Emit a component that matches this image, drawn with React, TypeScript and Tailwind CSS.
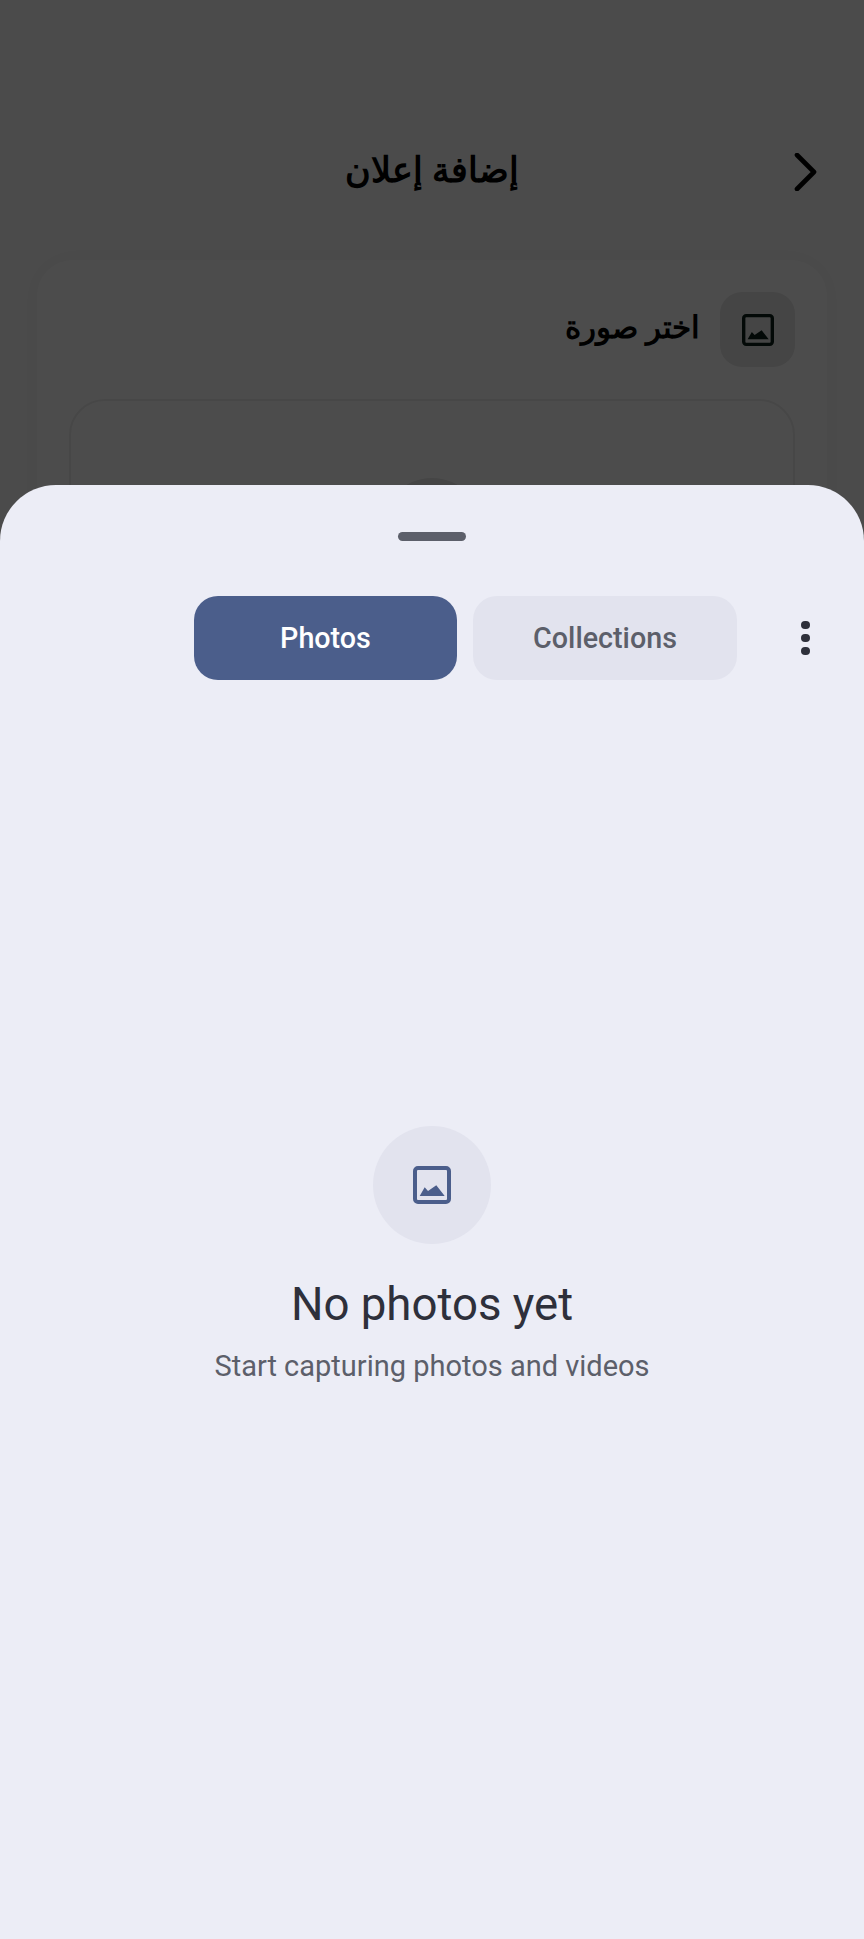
import React from "react";

function ImageIcon({ className }: { className?: string }) {
  return (
    <svg viewBox="0 0 38 38" className={className} fill="none">
      <rect x="2" y="2" width="34" height="34" rx="3" stroke="currentColor" strokeWidth="4" />
      <path d="M6.7 30 L11.7 21.3 L15 25 L23.3 19.3 L31.7 30 Z" fill="currentColor" />
    </svg>
  );
}

export default function App() {
  return (
    <div className="relative h-[1939px] w-[864px] overflow-hidden bg-[#fafafa] font-['Roboto',sans-serif]">
      {/* Page behind the sheet */}
      <div dir="rtl" className="flex flex-col px-[37px] pt-[145px]">
        <header className="relative flex h-[56px] items-center justify-center">
          <svg viewBox="0 0 24 38" className="absolute right-[9px] top-[8px] h-[38px] w-[24px]" fill="none">
            <path d="M3 2 L20 19 L3 36" stroke="#000" strokeWidth="4.6" strokeLinecap="round" strokeLinejoin="round" />
          </svg>
          <h1 className="mb-[5px] font-['Liberation_Serif',serif] text-[35px] font-bold leading-[40px] text-black">إضافة إعلان</h1>
        </header>
        <section className="mt-[59px] flex h-[700px] flex-col rounded-[36px] bg-white px-[32px] pt-[32px] shadow-[0_0_24px_rgba(0,0,0,0.02)]">
          <div className="flex items-center gap-[20px]">
            <div className="flex h-[75px] w-[75px] items-center justify-center rounded-[22px] bg-[#e6e6e6]">
              <ImageIcon className="h-[32px] w-[32px] text-[#0b2019]" />
            </div>
            <h2 className="mb-[3px] font-['Liberation_Serif',serif] text-[30.6px] font-bold leading-[36px] text-black">اختر صورة</h2>
          </div>
          <div className="mt-[32px] flex h-[400px] flex-col items-center rounded-[36px] border-2 border-[#eeeeee] pt-[77px]">
            <div className="h-[100px] w-[100px] rounded-full bg-[#e6e6e6]" />
          </div>
        </section>
      </div>

      {/* Scrim */}
      <div className="absolute inset-0 bg-black/70" />

      {/* Bottom sheet */}
      <div className="absolute inset-x-0 top-[485px] bottom-0 flex flex-col rounded-t-[56px] bg-[#ecedf6]">
        <div className="mt-[47px] h-[9px] w-[68px] self-center rounded-full bg-[#5c5f6a]" />
        <div className="relative mt-[55px] flex h-[84px] gap-[16px] pl-[194px]">
          <div className="flex h-[84px] w-[263px] items-center justify-center rounded-[24px] bg-[#4b5e8b] pt-[2px] text-[28.7px] font-medium text-white">
            Photos
          </div>
          <div className="flex h-[84px] w-[264px] items-center justify-center rounded-[24px] bg-[#e2e3ee] pt-[2px] text-[28.7px] font-medium text-[#5c5f6a]">
            Collections
          </div>
          <div className="absolute left-[801px] top-[25px] flex flex-col gap-[5px]">
            <span className="h-[8px] w-[9px] rounded-full bg-[#2e303b]" />
            <span className="h-[8px] w-[9px] rounded-full bg-[#2e303b]" />
            <span className="h-[8px] w-[9px] rounded-full bg-[#2e303b]" />
          </div>
        </div>
        <div className="mt-[446px] flex flex-col items-center">
          <div className="flex h-[118px] w-[118px] items-center justify-center rounded-full bg-[#e2e3ee]">
            <ImageIcon className="h-[38px] w-[38px] text-[#4b5e8b]" />
          </div>
          <div className="mt-[34px] text-[45.6px] leading-[54px] text-[#2e303b]">No photos yet</div>
          <div className="mt-[15px] text-[29px] leading-[38px] text-[#5c5f6a]">Start capturing photos and videos</div>
        </div>
      </div>
    </div>
  );
}
